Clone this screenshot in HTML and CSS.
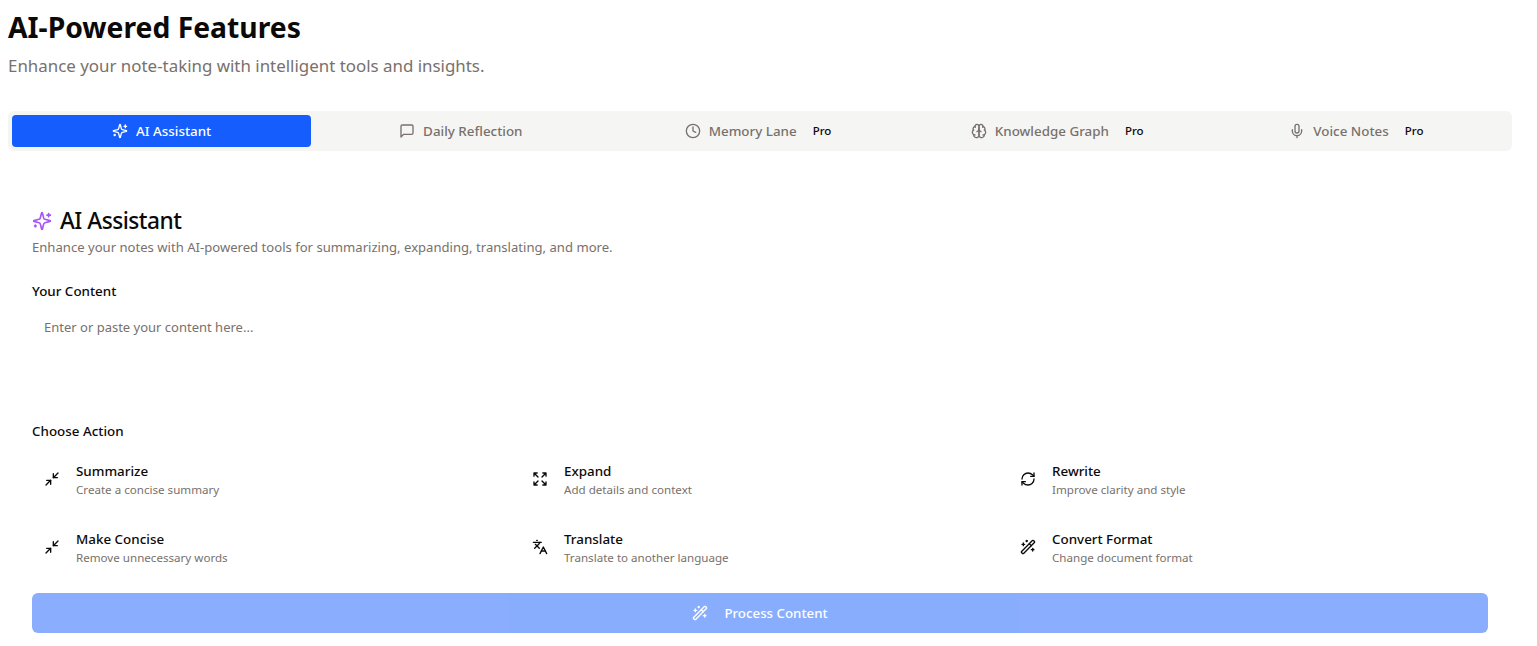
FILE: index.html
```html
<!DOCTYPE html>
<html lang="en">
<head>
<meta charset="utf-8">
<title>AI-Powered Features</title>
<link rel="stylesheet" href="styles.css">
</head>
<body>
<svg class="defs" width="0" height="0" aria-hidden="true">
  <defs>
    <symbol id="i-sparkles" viewBox="0 0 24 24"><path d="M9.937 15.5A2 2 0 0 0 8.5 14.063l-6.135-1.582a.5.5 0 0 1 0-.962L8.5 9.936A2 2 0 0 0 9.937 8.5l1.582-6.135a.5.5 0 0 1 .963 0L14.063 8.5A2 2 0 0 0 15.5 9.937l6.135 1.581a.5.5 0 0 1 0 .964L15.5 14.063a2 2 0 0 0-1.437 1.437l-1.582 6.135a.5.5 0 0 1-.963 0z"/><path d="M20 3v4"/><path d="M22 5h-4"/><path d="M4 17v2"/><path d="M5 18H3"/></symbol>
    <symbol id="i-message" viewBox="0 0 24 24"><path d="M21 15a2 2 0 0 1-2 2H7l-4 4V5a2 2 0 0 1 2-2h14a2 2 0 0 1 2 2z"/></symbol>
    <symbol id="i-clock" viewBox="0 0 24 24"><circle cx="12" cy="12" r="10"/><polyline points="12 6 12 12 16 14"/></symbol>
    <symbol id="i-brain" viewBox="0 0 24 24"><path d="M12 5a3 3 0 1 0-5.997.125 4 4 0 0 0-2.526 5.77 4 4 0 0 0 .556 6.588A4 4 0 1 0 12 18Z"/><path d="M12 5a3 3 0 1 1 5.997.125 4 4 0 0 1 2.526 5.77 4 4 0 0 1-.556 6.588A4 4 0 1 1 12 18Z"/><path d="M15 13a4.5 4.5 0 0 1-3-4 4.5 4.5 0 0 1-3 4"/><path d="M17.599 6.5a3 3 0 0 0 .399-1.375"/><path d="M6.003 5.125A3 3 0 0 0 6.401 6.5"/><path d="M3.477 10.896a4 4 0 0 1 .585-.396"/><path d="M19.938 10.5a4 4 0 0 1 .585.396"/><path d="M6 18a4 4 0 0 1-1.967-.516"/><path d="M19.967 17.484A4 4 0 0 1 18 18"/></symbol>
    <symbol id="i-mic" viewBox="0 0 24 24"><path d="M12 2a3 3 0 0 0-3 3v7a3 3 0 0 0 6 0V5a3 3 0 0 0-3-3Z"/><path d="M19 10v2a7 7 0 0 1-14 0v-2"/><line x1="12" x2="12" y1="19" y2="22"/></symbol>
    <symbol id="i-minimize" viewBox="0 0 24 24"><polyline points="4 14 10 14 10 20"/><polyline points="20 10 14 10 14 4"/><line x1="14" x2="21" y1="10" y2="3"/><line x1="3" x2="10" y1="21" y2="14"/></symbol>
    <symbol id="i-expand" viewBox="0 0 24 24"><path d="m21 21-6-6m6 6v-4.8m0 4.8h-4.8"/><path d="M3 16.2V21m0 0h4.8M3 21l6-6"/><path d="M21 7.8V3m0 0h-4.8M21 3l-6 6"/><path d="M3 7.8V3m0 0h4.8M3 3l6 6"/></symbol>
    <symbol id="i-refresh" viewBox="0 0 24 24"><path d="M3 12a9 9 0 0 1 9-9 9.75 9.75 0 0 1 6.74 2.74L21 8"/><path d="M21 3v5h-5"/><path d="M21 12a9 9 0 0 1-9 9 9.75 9.75 0 0 1-6.74-2.74L3 16"/><path d="M8 16H3v5"/></symbol>
    <symbol id="i-languages" viewBox="0 0 24 24"><path d="m5 8 6 6"/><path d="m4 14 6-6 2-3"/><path d="M2 5h12"/><path d="M7 2h1"/><path d="m22 22-5-10-5 10"/><path d="M14 18h6"/></symbol>
    <symbol id="i-wand" viewBox="0 0 24 24"><path d="m21.64 3.64-1.28-1.28a1.21 1.21 0 0 0-1.72 0L2.36 18.64a1.21 1.21 0 0 0 0 1.72l1.28 1.28a1.2 1.2 0 0 0 1.72 0L21.64 5.36a1.2 1.2 0 0 0 0-1.72"/><path d="m14 7 3 3"/><path d="M5 6v4"/><path d="M19 14v4"/><path d="M10 2v2"/><path d="M7 8H3"/><path d="M21 16h-4"/><path d="M11 3H9"/></symbol>
  </defs>
</svg>
<main class="page">
  <header class="page-head">
    <h1 class="page-title">AI-Powered Features</h1>
    <p class="page-sub">Enhance your note-taking with intelligent tools and insights.</p>
  </header>

  <nav class="tabs">
    <button class="tab tab-active"><svg class="icon"><use href="#i-sparkles"/></svg><span>AI Assistant</span></button>
    <button class="tab"><svg class="icon"><use href="#i-message"/></svg><span>Daily Reflection</span></button>
    <button class="tab"><svg class="icon"><use href="#i-clock"/></svg><span>Memory Lane</span><span class="badge">Pro</span></button>
    <button class="tab"><svg class="icon"><use href="#i-brain"/></svg><span>Knowledge Graph</span><span class="badge">Pro</span></button>
    <button class="tab"><svg class="icon"><use href="#i-mic"/></svg><span>Voice Notes</span><span class="badge">Pro</span></button>
  </nav>

  <section class="card">
    <h2 class="card-title"><svg class="icon icon-title"><use href="#i-sparkles"/></svg>AI Assistant</h2>
    <p class="card-desc">Enhance your notes with AI-powered tools for summarizing, expanding, translating, and more.</p>

    <label class="label label-content" for="content">Your Content</label>
    <textarea id="content" class="input" placeholder="Enter or paste your content here..."></textarea>

    <div class="label label-action">Choose Action</div>
    <div class="actions">
      <button class="action"><svg class="icon"><use href="#i-minimize"/></svg><span class="action-text"><span class="action-name">Summarize</span><span class="action-desc">Create a concise summary</span></span></button>
      <button class="action"><svg class="icon"><use href="#i-expand"/></svg><span class="action-text"><span class="action-name">Expand</span><span class="action-desc">Add details and context</span></span></button>
      <button class="action"><svg class="icon"><use href="#i-refresh"/></svg><span class="action-text"><span class="action-name">Rewrite</span><span class="action-desc">Improve clarity and style</span></span></button>
      <button class="action"><svg class="icon"><use href="#i-minimize"/></svg><span class="action-text"><span class="action-name">Make Concise</span><span class="action-desc">Remove unnecessary words</span></span></button>
      <button class="action"><svg class="icon"><use href="#i-languages"/></svg><span class="action-text"><span class="action-name">Translate</span><span class="action-desc">Translate to another language</span></span></button>
      <button class="action"><svg class="icon"><use href="#i-wand"/></svg><span class="action-text"><span class="action-name">Convert Format</span><span class="action-desc">Change document format</span></span></button>
    </div>

    <button class="process" disabled><svg class="icon"><use href="#i-wand"/></svg>Process Content</button>
  </section>
</main>
</body>
</html>
```
FILE: styles.css
```css
* { box-sizing: border-box; }

html, body {
  margin: 0;
  height: 100%;
  overflow: hidden;
  background: #fff;
}

body {
  font-family: "Noto Sans", "Liberation Sans", sans-serif;
  color: #0c0a09;
}

.defs { position: absolute; }

.page { padding: 9px 25px 0 8px; }

.page-title {
  margin: 0;
  font-size: 28.3px;
  line-height: 36px;
  font-weight: 700;
}

.page-sub {
  margin: 7px 0 31px;
  font-size: 16.9px;
  line-height: 28px;
  color: #78716c;
}

.icon {
  width: 16px;
  height: 16px;
  flex: none;
  fill: none;
  stroke: currentColor;
  stroke-width: 2;
  stroke-linecap: round;
  stroke-linejoin: round;
}

.tabs {
  display: grid;
  grid-template-columns: repeat(5, 1fr);
  height: 40px;
  padding: 4px;
  background: #f5f5f4;
  border-radius: 6px;
}

.tab {
  display: flex;
  align-items: center;
  justify-content: center;
  gap: 8px;
  border: 0;
  border-radius: 4px;
  background: transparent;
  color: #78716c;
  font: 500 13.4px/20px "Noto Sans", "Liberation Sans", sans-serif;
}

.tab-active {
  background: #155dfc;
  color: #fff;
}

.badge {
  margin-left: 6px;
  padding: 0 4px 0 2px;
  font-size: 11.5px;
  line-height: 16px;
  color: #0c0a09;
}

.card { padding: 54px 24px 0; }

.card-title {
  display: flex;
  align-items: center;
  gap: 8px;
  margin: 0;
  font-size: 22.7px;
  line-height: 32px;
  font-weight: 500;
  letter-spacing: -0.5px;
}

.icon-title {
  width: 20px;
  height: 20px;
  color: #a855f7;
}

.card-desc {
  margin: 0;
  font-size: 13.1px;
  line-height: 20px;
  color: #78716c;
}

.label {
  display: block;
  font-size: 13.4px;
  line-height: 20px;
  font-weight: 500;
}

.label-content { margin-top: 24px; }
.label-action { margin-top: 16px; }

.input {
  display: block;
  width: 100%;
  height: 96px;
  margin-top: 8px;
  padding: 8px 12px;
  border: 0;
  outline: 0;
  resize: none;
  background: transparent;
  font: 400 13px/20px "Noto Sans", "Liberation Sans", sans-serif;
  color: #0c0a09;
}

.input::placeholder { color: #78716c; opacity: 1; }

.actions {
  display: grid;
  grid-template-columns: repeat(3, 1fr);
  gap: 8px;
  margin-top: 8px;
}

.action {
  display: flex;
  align-items: center;
  gap: 16px;
  height: 60px;
  padding: 0 12px;
  border: 0;
  background: transparent;
  color: #0c0a09;
  font-family: inherit;
  text-align: left;
}

.action-text {
  display: flex;
  flex-direction: column;
}

.action-name {
  font-size: 13.4px;
  line-height: 20px;
  font-weight: 500;
}

.action-desc {
  margin-top: 1px;
  font-size: 11.6px;
  line-height: 16px;
  color: #78716c;
}

.process {
  display: flex;
  align-items: center;
  justify-content: center;
  gap: 16px;
  width: 100%;
  height: 40px;
  margin-top: 16px;
  border: 0;
  border-radius: 6px;
  background: #155dfc;
  color: #fff;
  opacity: 0.5;
  font: 500 13.3px/20px "Noto Sans", "Liberation Sans", sans-serif;
}
```
